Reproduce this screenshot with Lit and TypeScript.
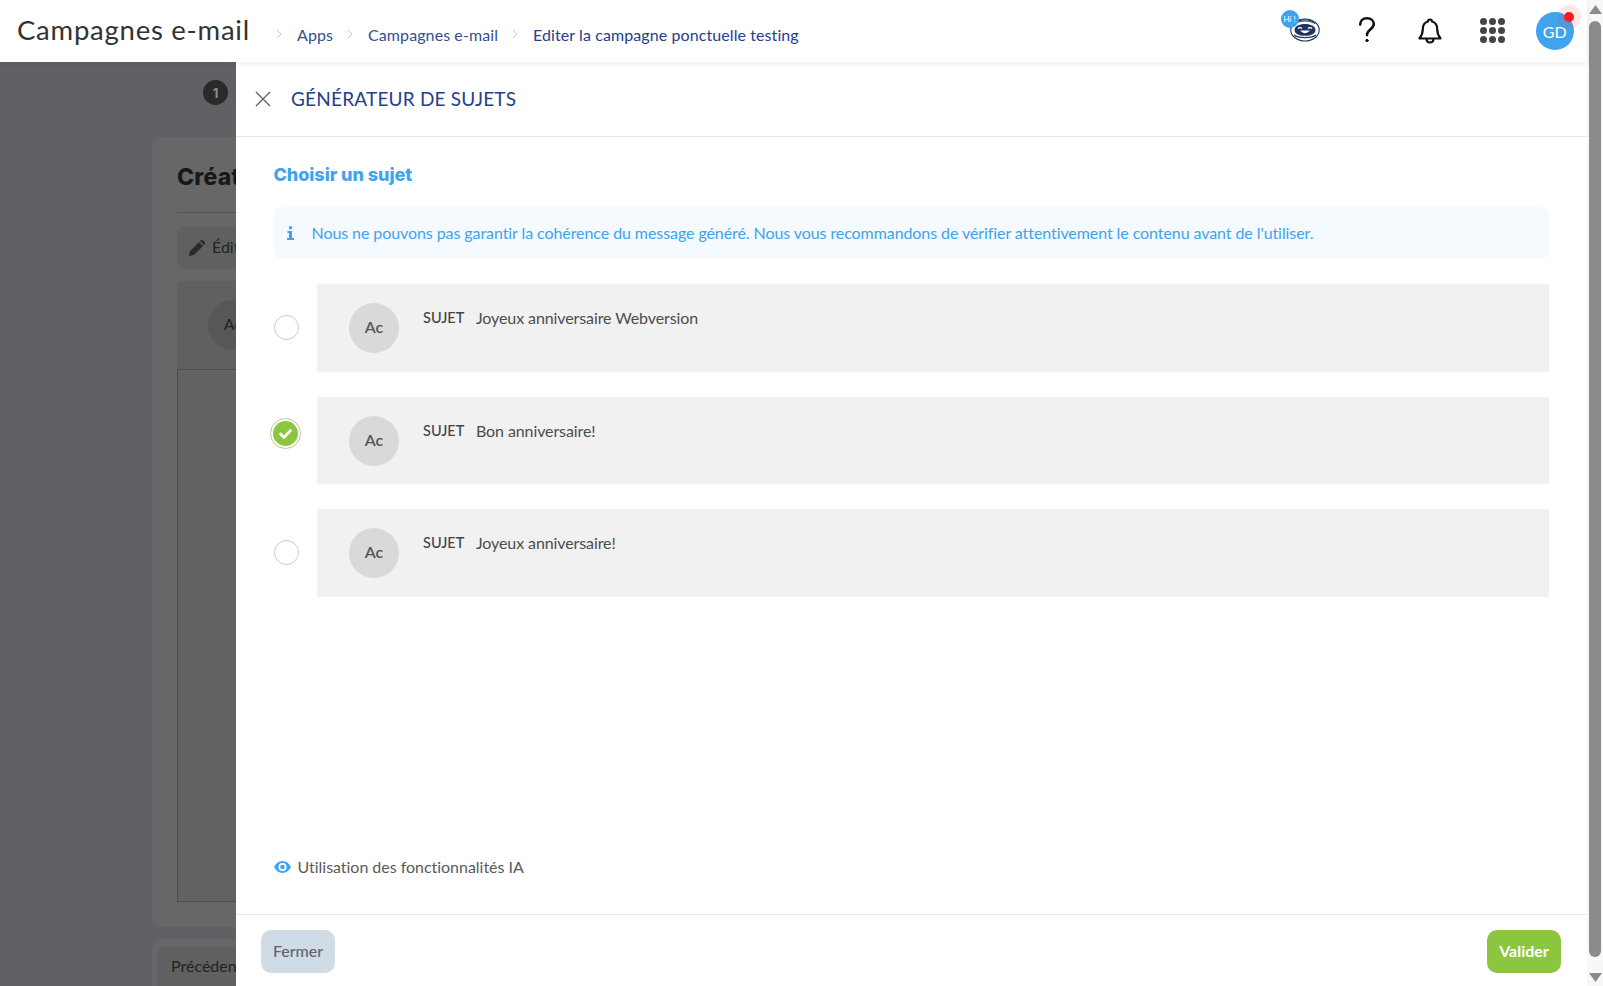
import { LitElement, html, css, svg } from "lit";
import { customElement } from "lit/decorators.js";

const subjects = [
  { text: "Joyeux anniversaire Webversion", checked: false },
  { text: "Bon anniversaire!", checked: true },
  { text: "Joyeux anniversaire!", checked: false },
];

@customElement("app-root")
export class AppRoot extends LitElement {
  static styles = css`
    :host { display: block; width: 1603px; height: 986px; overflow: hidden; font-family: "Lato", "Noto Sans", sans-serif; color: #4a4a4a; }
    * { box-sizing: border-box; }
    .root { display: grid; grid-template-columns: 1587px 16px; height: 986px; }
    .left { position: relative; display: flex; flex-direction: column; height: 986px; min-width: 0; }
    .topbar { height: 62px; flex: none; display: flex; align-items: center; background: #fff; box-shadow: 0 2px 6px rgba(0,0,0,.07); position: relative; z-index: 3; padding-left: 17px; }
    .app-title { font-size: 27.5px; letter-spacing: .75px; color: #333; width: 259px; white-space: nowrap; margin-top: -4px; }
    .crumbs { display: flex; align-items: center; font-size: 16px; letter-spacing: .09px; color: #35508f; margin-top: 6px; white-space: nowrap; }
    .chev { width: 6px; height: 10px; margin: 0 15px 0 0; color: #c9c9c9; flex: none; }
    .crumb-gap { margin-right: 14px; }
    .strong { color: #24408e; }
    .tools { margin-left: auto; display: flex; align-items: center; padding-right: 1px; }
    .tool { width: 62.5px; height: 62px; display: flex; align-items: center; justify-content: center; position: relative; }
    .hi { position: absolute; left: 7px; top: 10px; width: 18px; height: 18px; border-radius: 50%; background: #3fa3ee; color: #fff; font-size: 8px; display: flex; align-items: center; justify-content: center; white-space: nowrap; z-index: 1; }
    .avatar { width: 38px; height: 38px; border-radius: 50%; background: #3fa3ee; color: #fff; font-size: 16px; display: flex; align-items: center; justify-content: center; }
    .halo { position: absolute; left: 33px; top: 5px; width: 24px; height: 24px; border-radius: 50%; background: rgba(255,60,60,.12); display: flex; align-items: center; justify-content: center; }
    .halo i { display: block; width: 10px; height: 10px; border-radius: 50%; background: #f91a1a; }
    .bg { flex: 1; min-height: 0; background: #5f6165; display: flex; flex-direction: column; padding: 18px 0 0 152px; overflow: hidden; color: #222; }
    .step { width: 25px; height: 25px; border-radius: 50%; background: #2a2a2a; color: #8d8d8d; font: 700 13px "Inter", sans-serif; display: flex; align-items: center; justify-content: center; margin-left: 51px; flex: none; }
    .bg-card { margin-top: 32px; height: 790px; background: #676767; border-radius: 8px; padding: 25px; flex: none; }
    .bg-title { font: 800 23px/30px "Inter", sans-serif; letter-spacing: .2px; color: #181818; height: 51px; border-bottom: 1px solid #555; white-space: nowrap; }
    .bg-edit { margin-top: 13px; height: 43px; border-radius: 8px; background: #606060; display: flex; align-items: center; padding: 0 0 2px 12px; gap: 7px; font-size: 16px; white-space: nowrap; }
    .bg-edit svg { width: 16px; height: 16px; margin-top: 2px; }
    .bg-box { margin-top: 12px; height: 621px; background: #606060; border-radius: 6px 6px 0 0; display: flex; flex-direction: column; }
    .bg-head { height: 89px; flex: none; padding: 19px 0 0 31px; border-bottom: 1px solid #4e4e4e; }
    .bg-av { width: 50px; height: 50px; border-radius: 50%; background: #575757; display: flex; align-items: center; justify-content: center; font-size: 16px; color: #222; padding-bottom: 3px; }
    .bg-body { flex: 1; border: 1px solid #4e4e4e; border-top: 0; background: #626262; }
    .bg-foot { margin-top: 12px; height: 60px; background: #676767; border-radius: 8px 8px 0 0; padding: 7px 0 0 6px; flex: none; }
    .bg-prev { height: 50px; width: 120px; border-radius: 8px; background: #606060; padding: 10px 0 0 13px; font-size: 16px; white-space: nowrap; }
    .drawer { position: absolute; left: 236px; right: 0; top: 62px; bottom: 0; background: #fff; z-index: 2; display: flex; flex-direction: column; }
    .d-head { height: 75px; flex: none; border-bottom: 1px solid #e8e8e8; display: flex; align-items: center; padding: 0 0 1px 19px; gap: 20px; }
    .d-head svg { width: 16px; height: 16px; color: #666; }
    .d-title { font-size: 19px; letter-spacing: .2px; color: #24408e; white-space: nowrap; }
    .d-body { flex: 1; min-height: 0; padding: 23px 38px 0 37.5px; display: flex; flex-direction: column; }
    .choose { font: 800 18px/30px "Inter", sans-serif; letter-spacing: -.05px; color: #3fa3ee; height: 30px; }
    .info { margin-top: 17px; height: 52px; border-radius: 8px; background: #f4faff; color: #3fa3ee; display: flex; align-items: center; padding: 0 0 2px 13px; font-size: 16px; letter-spacing: -.08px; white-space: nowrap; }
    .info svg { width: 7px; height: 14px; flex: none; margin: 2px 18px 0 0; }
    .rows { margin-top: 25px; display: flex; flex-direction: column; gap: 25px; }
    .line { display: flex; align-items: center; }
    .radio-cell { width: 43.5px; flex: none; display: flex; align-items: center; }
    .radio { width: 25px; height: 25px; border-radius: 50%; border: 1px solid #ccc; background: #fff; flex: none; }
    .on { width: 31px; height: 31px; margin: -13px 0 0 -3.5px; border-radius: 50%; border: 1px solid #b5cf8c; display: flex; align-items: center; justify-content: center; flex: none; }
    .on span { width: 25px; height: 25px; border-radius: 50%; background: #8cc63f; display: flex; align-items: center; justify-content: center; }
    .on svg { width: 15px; height: 15px; }
    .row { flex: 1; height: 87.6px; background: #f1f1f1; display: flex; padding: 19px 0 0 32px; }
    .av { width: 50px; height: 50px; border-radius: 50%; background: #d9d9d9; color: #555; font-size: 16px; font-weight: 600; display: flex; align-items: center; justify-content: center; flex: none; padding-bottom: 3px; }
    .txt { margin-left: 24px; margin-top: 5px; font-size: 16px; letter-spacing: -.1px; line-height: 20px; white-space: nowrap; display: flex; color: #4c4c4c; }
    .sujet { font-size: 14.5px; font-weight: 500; letter-spacing: 0; width: 53px; flex: none; color: #444; }
    .usage { margin-top: auto; margin-bottom: 38px; display: flex; align-items: center; gap: 7px; font-size: 16px; letter-spacing: -.03px; color: #5a5a5a; white-space: nowrap; }
    .usage svg { width: 17px; height: 12px; }
    .d-foot { height: 72px; flex: none; border-top: 1px solid #e8e8e8; display: flex; justify-content: space-between; padding: 15px 26px 0 25px; }
    .btn { width: 74px; height: 43px; border-radius: 10px; display: flex; align-items: center; justify-content: center; font-size: 16px; padding-bottom: 2px; }
    .close { background: #cfdbe5; color: #5c6670; font-weight: 500; }
    .ok { background: #8cc63f; color: #fff; font-weight: 700; }
    .scroll { background: #f8f8f8; display: flex; flex-direction: column; align-items: center; padding: 5px 0 4px; height: 986px; }
    .up, .down { width: 13px; height: 9px; flex: none; color: #8b8b8b; }
    .thumb { width: 11.5px; margin: 7px 0 16px; flex: 1; border-radius: 6px; background: #8b8b8b; }
  `;

  private chev() {
    return html`<svg class="chev" viewBox="0 0 6 10" fill="none" stroke="currentColor" stroke-width="1"><path d="M1 1l4 4-4 4"/></svg>`;
  }

  private robot() {
    return html`<svg class="robot" width="30" height="25" viewBox="0 0 30 25" style="margin-top:-3px" fill="none" stroke="#24345f" stroke-width="1.1">
      <ellipse cx="15" cy="13" rx="14.200" ry="11"/>
      <path d="M5 7C8 3.500 11 2.800 15 2.800s7 .7 10 4.200"/>
      <path fill="#24345f" stroke="none" d="M4.500 13c0-3.800 4.500-6 10.500-6s10.500 2.200 10.500 6-4.500 5.800-10.500 5.800S4.500 16.800 4.500 13z"/>
      <path stroke="#fff" stroke-width="1.300" d="M8 11.500c1-1 3-1 4 0M18 11.500c1-1 3-1 4 0"/>
      <path stroke="#fff" fill="#fff" d="M11.500 14c2 1.800 5 1.800 7 0z"/>
      <path d="M7 5.500c4-2 12-2 16 0"/>
      <path d="M4 18c4 3.500 18 3.500 22 0"/>
    </svg>`;
  }

  private dots() {
    const cells = [];
    for (let r = 0; r < 3; r++) for (let c = 0; c < 3; c++) cells.push(svg`<circle cx=${3.5 + c * 9} cy=${3.5 + r * 9} r="3.500"/>`);
    return html`<svg width="25" height="25" viewBox="0 0 25 25" fill="#444" style="margin-top:-1px">${cells}</svg>`;
  }

  render() {
    return html`<div class="root">
      <div class="left">
        <header class="topbar">
          <div class="app-title">Campagnes e-mail</div>
          <nav class="crumbs">
            ${this.chev()}<span class="crumb-gap">Apps</span>
            ${this.chev()}<span class="crumb-gap">Campagnes e-mail</span>
            ${this.chev()}<span class="strong">Editer la campagne ponctuelle testing</span>
          </nav>
          <div class="tools">
            <div class="tool"><span class="hi">Hi !</span>${this.robot()}</div>
            <div class="tool"><svg width="18" height="26" viewBox="0 0 18 26" style="margin-top:-2px" fill="none" stroke="#111" stroke-width="2.600" stroke-linecap="round"><path d="M2.200 7.500C2.200 3.800 5 1.300 9 1.300s6.800 2.500 6.800 5.800c0 5-6.800 5.500-6.800 11"/><circle cx="9" cy="23.500" r="1.200" fill="#111" stroke-width="1"/></svg></div>
            <div class="tool"><svg width="24" height="26" viewBox="0 0 24 26" style="margin-top:-1px" fill="none" stroke="#111" stroke-width="2.200" stroke-linejoin="round"><path d="M12 1.500c-1.300 0-2 .9-2 2-3.500 1-5.200 4-5.200 7.500 0 4.500-1 6.500-3.300 9.500h21c-2.300-3-3.300-5-3.300-9.500 0-3.500-1.700-6.500-5.200-7.500 0-1.100-.7-2-2-2z"/><path d="M8.500 20.500c0 2.500 1.500 4 3.500 4s3.500-1.500 3.500-4"/></svg></div>
            <div class="tool">${this.dots()}</div>
            <div class="tool"><div class="avatar">GD</div><span class="halo"><i></i></span></div>
          </div>
        </header>
        <div class="bg">
          <div class="step">1</div>
          <div class="bg-card">
            <div class="bg-title">Création</div>
            <div class="bg-edit"><svg viewBox="0 0 16 16" fill="#2a2a2a"><path d="M0 16l1-5 9-9 4 4-9 9zM11 1l1-1c.5-.4 1-.4 1.500 0l2.500 2.500c.4.5.4 1 0 1.500l-1 1z"/></svg>Édition</div>
            <div class="bg-box">
              <div class="bg-head"><div class="bg-av">Ac</div></div>
              <div class="bg-body"></div>
            </div>
          </div>
          <div class="bg-foot"><div class="bg-prev">Précédent</div></div>
        </div>
        <aside class="drawer">
          <div class="d-head">
            <svg viewBox="0 0 16 16" fill="none" stroke="currentColor" stroke-width="1.400"><path d="M1 1l14 14M15 1L1 15"/></svg>
            <div class="d-title">GÉNÉRATEUR DE SUJETS</div>
          </div>
          <div class="d-body">
            <div class="choose">Choisir un sujet</div>
            <div class="info">
              <svg viewBox="0 0 7 14" fill="currentColor"><circle cx="3.500" cy="1.700" r="1.700"/><path d="M.5 5h4.500v7H7v2H0v-2h2V7H.5z"/></svg>
              Nous ne pouvons pas garantir la cohérence du message généré. Nous vous recommandons de vérifier attentivement le contenu avant de l'utiliser.
            </div>
            <div class="rows">
              ${subjects.map((s) => html`<div class="line">
                <div class="radio-cell">
                  ${s.checked
                    ? html`<div class="on"><span><svg viewBox="0 0 15 15" fill="none" stroke="#fff" stroke-width="2.600" stroke-linecap="round" stroke-linejoin="round"><path d="M2.500 8l3.500 3.500 6.500-7"/></svg></span></div>`
                    : html`<div class="radio"></div>`}
                </div>
                <div class="row">
                  <div class="av">Ac</div>
                  <div class="txt"><span class="sujet">SUJET</span><span>${s.text}</span></div>
                </div>
              </div>`)}
            </div>
            <div class="usage">
              <svg viewBox="0 0 17 12"><path fill="#3fa3ee" fill-rule="evenodd" d="M8.500 0C5 0 2 2.200 0 6c2 3.800 5 6 8.500 6S15 9.800 17 6c-2-3.800-5-6-8.500-6zm0 2a4 4 0 1 1 0 8 4 4 0 0 1 0-8z"/><circle cx="8.500" cy="6" r="2.300" fill="#3fa3ee"/></svg>
              Utilisation des fonctionnalités IA
            </div>
          </div>
          <div class="d-foot">
            <div class="btn close">Fermer</div>
            <div class="btn ok">Valider</div>
          </div>
        </aside>
      </div>
      <div class="scroll">
        <svg class="up" viewBox="0 0 13 9" fill="currentColor"><path d="M6.500 0L13 9H0z"/></svg>
        <div class="thumb"></div>
        <svg class="down" viewBox="0 0 13 9" fill="currentColor"><path d="M0 0h13L6.500 9z"/></svg>
      </div>
    </div>`;
  }
}
